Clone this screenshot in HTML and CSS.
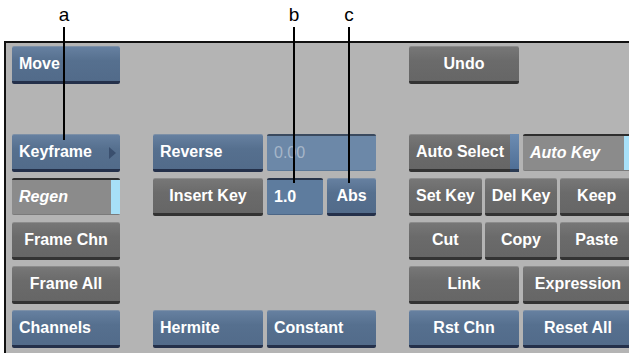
FILE: index.html
```html
<!DOCTYPE html>
<html lang="en">
<head>
	<meta charset="UTF-8">
	<title>Animation Keyframe Controls</title>
	<link rel="stylesheet" href="styles.css">
</head>
<body>
	<div class="page">
		<div class="callout callout-a"><span>a</span><i></i></div>
		<div class="callout callout-b"><span>b</span><i></i></div>
		<div class="callout callout-c"><span>c</span><i></i></div>

		<div class="panel">
			<div class="btn blue left c1 r1">Move</div>
			<div class="btn gray c6 r1">Undo</div>

			<div class="btn blue left arrow c1 r3">Keyframe</div>
			<div class="btn blue left c3 r3">Reverse</div>
			<div class="field dim c4 r3">0.00</div>
			<div class="btn gray left strip c6 r3">Auto Select</div>
			<div class="field toggle c7 r3"><em>Auto Key</em></div>

			<div class="field toggle c1 r4"><em>Regen</em></div>
			<div class="btn gray c3 r4">Insert Key</div>
			<div class="pair c4 r4">
				<div class="field value">1.0</div>
				<div class="btn blue">Abs</div>
			</div>
			<div class="trio c67 r4">
				<div class="btn gray">Set Key</div>
				<div class="btn gray">Del Key</div>
				<div class="btn gray">Keep</div>
			</div>

			<div class="btn gray c1 r5">Frame Chn</div>
			<div class="trio c67 r5">
				<div class="btn gray">Cut</div>
				<div class="btn gray">Copy</div>
				<div class="btn gray">Paste</div>
			</div>

			<div class="btn gray c1 r6">Frame All</div>
			<div class="btn gray c6 r6">Link</div>
			<div class="btn gray c7 r6">Expression</div>

			<div class="btn blue left c1 r7">Channels</div>
			<div class="btn blue left c3 r7">Hermite</div>
			<div class="btn blue left c4 r7">Constant</div>
			<div class="btn blue c6 r7">Rst Chn</div>
			<div class="btn blue c7 r7">Reset All</div>
		</div>
	</div>
</body>
</html>
```

FILE: styles.css
```css
*{margin: 0;padding: 0;box-sizing: border-box;}
body{background: #fff;font-family: "Liberation Sans", Arial, sans-serif;}
.page{position: relative;width: 629px;height: 353px;overflow: hidden;}

/* callout letters with leader lines */
.callout{position: absolute;top: 0;z-index: 2;}
.callout span{
	position: absolute;top: 4px;left: -6px;
	width: 12px;text-align: center;
	font-size: 19px;color: #000;
}
.callout i{position: absolute;top: 27px;left: -1px;width: 2px;background: #000;}
.callout-a{left: 64px;}
.callout-a i{height: 113px;}
.callout-b{left: 294px;}
.callout-b i{height: 156px;}
.callout-c{left: 349px;}
.callout-c i{height: 156px;}

.panel{
	margin: 41px 0 0 4px;
	height: 312px;
	background: #b4b4b4;
	border-top: 2px solid #111;
	border-left: 2px solid #111;
	padding: 3px 0 0 6px;
	display: grid;
	grid-template-columns: 108px 25px 110px 109px 25px 110px 110px;
	grid-template-rows: repeat(7, 38px);
	column-gap: 4px;
	row-gap: 6px;
	overflow: hidden;
}

.c1{grid-column: 1;}
.c3{grid-column: 3;}
.c4{grid-column: 4;}
.c6{grid-column: 6;}
.c7{grid-column: 7;}
.c67{grid-column: 6 / 8;}
.r1{grid-row: 1;}
.r3{grid-row: 3;}
.r4{grid-row: 4;}
.r5{grid-row: 5;}
.r6{grid-row: 6;}
.r7{grid-row: 7;}

.btn, .field{
	position: relative;
	display: flex;align-items: center;justify-content: center;
	font-size: 16px;font-weight: bold;color: #fff;
	border-radius: 2px;
	white-space: nowrap;
	height: 38px;
}
.btn{border-top: 1px solid rgba(255,255,255,0.25);}
.left{justify-content: flex-start;padding-left: 7px;}

.blue{
	background: linear-gradient(#6680a0, #56708f 40%, #526b8a);
	border-bottom: 3px solid #24304a;
}
.gray{
	background: linear-gradient(#777, #6b6b6b 40%, #666);
	border-bottom: 3px solid #333;
}

.arrow::after{
	content: "";
	position: absolute;right: 4px;top: 12px;
	border-left: 7px solid #3a4f6e;
	border-top: 6px solid transparent;
	border-bottom: 6px solid transparent;
}
.strip::after{
	content: "";
	position: absolute;right: 0;top: -1px;bottom: -3px;
	width: 9px;
	background: linear-gradient(#6c8cb2, #4f6f96);
	border-bottom: 3px solid #2a3a52;
}

.field{
	justify-content: flex-start;
	padding-left: 7px;
	border-top: 2px solid #2e2e2e;
	border-bottom: 1px solid #7a7a7a;
	height: 37px;
}
.field em{font-style: italic;}
.toggle{background: #8b8b8b;}
.toggle::after{
	content: "";
	position: absolute;right: 0;top: 0;bottom: 0;
	width: 9px;
	background: #a7e0f8;
}
.dim{
	background: #6c88a8;
	border-top-color: #3b4a5e;
	border-bottom-color: #5c7896;
	color: #a6b6c8;
	font-weight: normal;
}
.value{
	flex: 1;
	background: #5e7c9e;
	border-top-color: #283448;
	border-bottom-color: #4c6686;
}

.pair{display: flex;gap: 4px;}
.pair .btn{flex: 1;}
.trio{display: flex;gap: 3px;}
.trio .btn{flex: 1;}
```
